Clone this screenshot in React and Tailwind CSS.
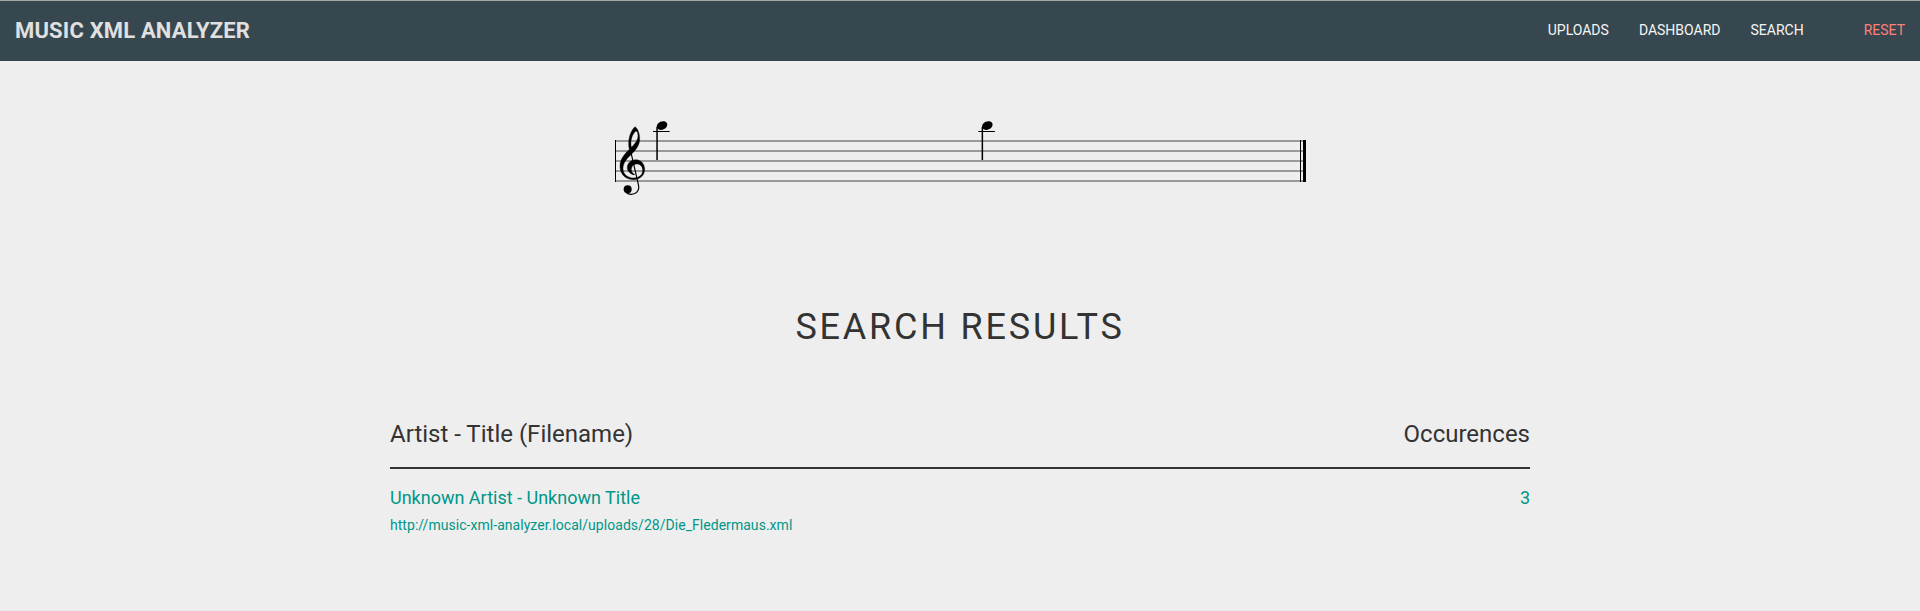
const staffLines = [31, 41, 51, 61, 71];

function Note({ x }) {
  return (
    <g transform={`translate(${x} 0)`}>
      <ellipse cx="5" cy="15.6" rx="5.5" ry="4.1" transform="rotate(-24 5 15.6)" />
      <rect x="-0.7" y="17" width="1.5" height="33" />
      <rect x="-4" y="21" width="16.6" height="1" />
    </g>
  );
}

function Clef() {
  return (
    <g transform="scale(0.33333)">
      <path
        fillRule="evenodd"
        stroke="#000"
        strokeWidth="1.2"
        d="M90 50 C98 55 104 70 104 86 C104 106 92 120 80 132 C66 145 54 158 54 176 C54 192 68 204 86 204 C104 204 113 193 113 181 C113 169 105 162 96 162 C84 162 79 171 79 179 C79 186 83 190 89 193 L87 195 C74 191 67 182 67 173 C67 159 78 149 93 149 C108 149 119 162 119 178 C119 196 105 209 85 209 C62 209 45 193 45 169 C45 148 58 133 73 118 C68 98 72 67 90 50 Z M93 63 C81 72 75 93 79 112 C91 100 99 90 99 77 C99 70 97 64 93 63 Z"
      />
      <path d="M78 128 L100 223 C105 243 92 253 79 253 C72 253 66 250 63 247" fill="none" stroke="#000" strokeWidth="3.5" />
      <circle cx="68" cy="238" r="12" />
    </g>
  );
}

function Score() {
  return (
    <svg className="block h-[95px] w-[710px]" viewBox="0 0 710 95">
      {staffLines.map((y) => (
        <rect key={y} x="10" y={y - 1} width="688" height="2" fill="#999" />
      ))}
      <rect x="10" y="30" width="1" height="42" />
      <rect x="695" y="30" width="1" height="42" />
      <rect x="698" y="30" width="3" height="42" />
      <Clef />
      <Note x={52} />
      <Note x={377.3} />
    </svg>
  );
}

export default function App() {
  return (
    <div className="h-[611px] overflow-hidden bg-[#eee] font-['Roboto',sans-serif] text-[#333]">
      <header className="flex h-[61px] items-center justify-between border-t border-[#a5a7a7] bg-[#37474f] px-[15px] pb-[2px]">
        <a className="text-[22px] font-bold tracking-[0.17px] text-[#e0e0e0]">MUSIC XML ANALYZER</a>
        <nav className="flex gap-[30px] text-sm text-[#f5f5f5]">
          <a>UPLOADS</a>
          <a>DASHBOARD</a>
          <a>SEARCH</a>
          <a className="ml-[30px] text-[#ff8078]">RESET</a>
        </nav>
      </header>
      <main>
        <div className="pl-[605px] pt-[49px]">
          <Score />
        </div>
        <h1 className="mt-[102px] text-center text-[36px] leading-10 font-normal tracking-[2.8px]">SEARCH RESULTS</h1>
        <section className="mx-auto mt-[67px] w-[1140px]">
          <div className="flex h-[55px] justify-between border-b-2 border-[#333] pt-1 text-2xl font-normal">
            <span>Artist - Title (Filename)</span>
            <span>Occurences</span>
          </div>
          <a className="mt-[15px] flex justify-between text-lg text-[#009688]">
            <span>Unknown Artist - Unknown Title</span>
            <span>3</span>
          </a>
          <a className="mt-[3px] block text-sm tracking-[0.04px] text-[#009688]">http://music-xml-analyzer.local/uploads/28/Die_Fledermaus.xml</a>
        </section>
      </main>
    </div>
  );
}
